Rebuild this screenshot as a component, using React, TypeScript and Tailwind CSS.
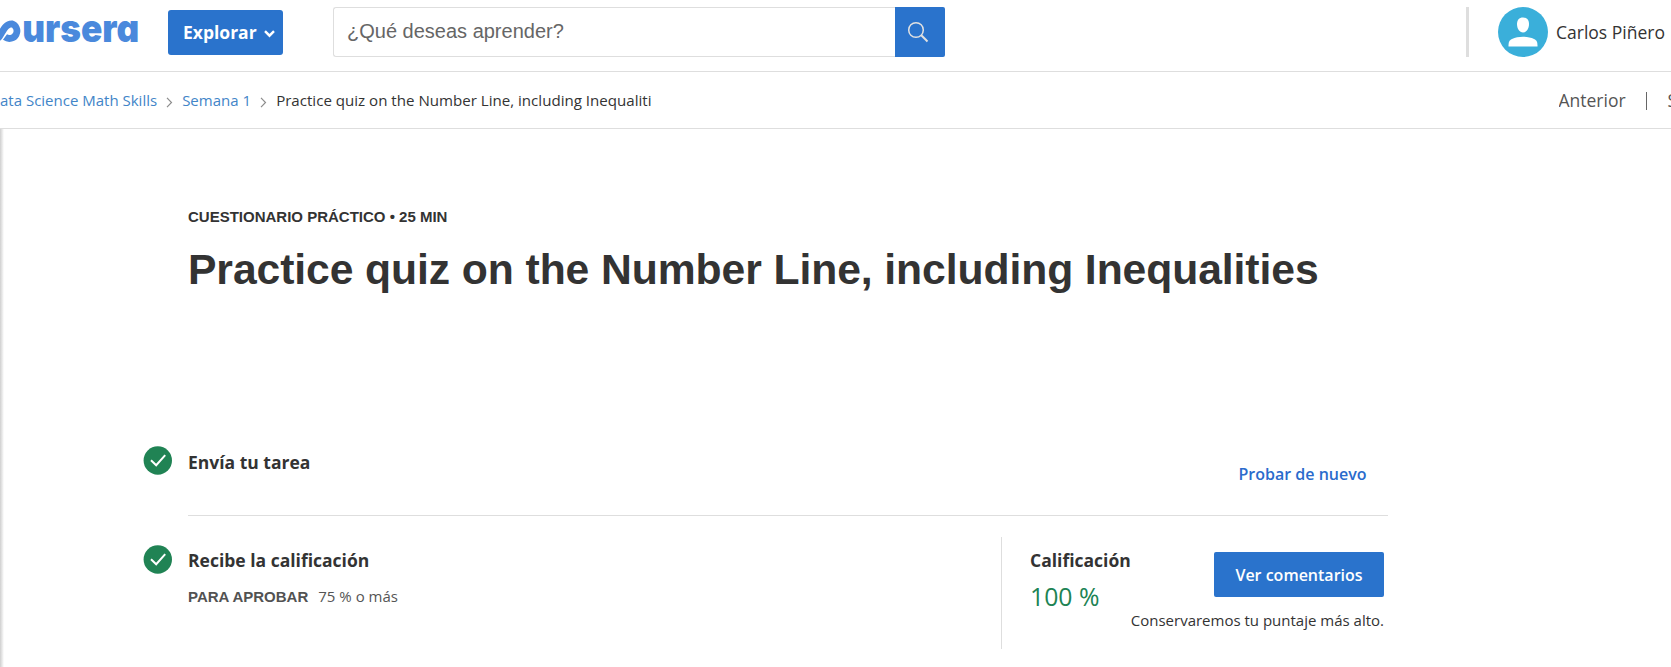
const SANS = 'font-["Open_Sans",sans-serif]';
const ARIAL = 'font-["Liberation_Sans",Arial,sans-serif]';

function Logo() {
  return (
    <svg className="block h-[50px] w-[140px] shrink-0" viewBox="0 0 140 50" fill="none" role="img" aria-label="coursera">
      <path d="M-2 31 C1.500 28.500 4 16.800 11.700 16.800 A7.500 7.500 0 1 1 5 30" stroke="#4A89DC" strokeWidth="6.800" />
      <text
        x="22.2"
        y="34.8"
        textLength="117"
        lengthAdjust="spacingAndGlyphs"
        fill="#4A89DC"
        className='font-["Inter",sans-serif] text-[39px] font-black [font-feature-settings:"cv11"]'
      >
        ursera
      </text>
    </svg>
  );
}

function Check() {
  return (
    <svg className="block size-[29px] shrink-0" viewBox="0 0 29 29" fill="none">
      <circle cx="14.8" cy="14.5" r="14.2" fill="#208354" />
      <path d="M8 14.2 L13.2 19.2 L22.2 9.2" stroke="#fff" strokeWidth="2" />
    </svg>
  );
}

function Chevron({ className }: { className: string }) {
  return (
    <svg className={`h-[11px] w-[7px] shrink-0 ${className}`} viewBox="0 0 7 11" fill="none">
      <path d="M1 0.8 L5.5 5.5 L1 10.2" stroke="#8c8c8c" strokeWidth="1.2" />
    </svg>
  );
}

function Header() {
  return (
    <header className="flex h-[72px] items-start border-b border-[#dedede] pt-[7px]">
      <Logo />
      <button className="mt-[3px] ml-7 flex h-[45px] w-[115px] shrink-0 items-center rounded-[3px] bg-[#2a73cc] pl-[15px] text-[17.5px] font-bold text-white">
        Explorar
        <svg className="mt-[3px] ml-[7px] h-[8px] w-[11px]" viewBox="0 0 11 8" fill="none">
          <path d="M1 1.2 L5.5 5.7 L10 1.2" stroke="#fff" strokeWidth="2.4" />
        </svg>
      </button>
      <div className="ml-[50px] flex h-[50px] w-[612px] shrink-0">
        <div className={`flex flex-1 items-center rounded-l-[3px] border border-r-0 border-[#dedede] pb-[3px] pl-[13px] text-[20px] text-[#666] ${ARIAL}`}>
          ¿Qué deseas aprender?
        </div>
        <div className="flex w-[50px] items-center justify-center rounded-r-[2px] bg-[#2a73cc]">
          <svg className="mr-[4px] size-[22px]" viewBox="0 0 22 22" fill="none" stroke="#e1e1e1" strokeWidth="1.5">
            <circle cx="9" cy="9" r="7.3" />
            <path d="M14.3 14.3 L20.5 20.5" strokeWidth="2" />
          </svg>
        </div>
      </div>
      <div className="ml-auto flex h-[50px] shrink-0 items-center pr-[3px] whitespace-nowrap">
        <div className="h-[50px] w-[3px] bg-[#dedede]" />
        <svg className="ml-[29px] size-[50px]" viewBox="0 0 50 50">
          <circle cx="25" cy="25" r="25" fill="#3aafda" />
          <path d="M25 10.4 C29 10.4 31 13 31 17 C31 21.500 28.500 25.500 25 25.500 C21.500 25.500 19 21.500 19 17 C19 13 21 10.4 25 10.4Z" fill="#fff" />
          <path d="M10.500 39.500 C10.500 35 11 33.500 14 32 C20 29 30 29 36 32 C39 33.500 39.500 35 39.500 39.500Z" fill="#fff" />
        </svg>
        <span className="ml-2 w-[112px] text-[17.5px] text-[#333]">Carlos Piñero</span>
      </div>
    </header>
  );
}

function Breadcrumbs() {
  return (
    <nav className="flex h-[57px] items-center overflow-hidden border-b border-[#dedede] text-[15px] whitespace-nowrap">
      <a className="text-[#4285c8]">ata Science Math Skills</a>
      <Chevron className="ml-[9px] mt-1" />
      <a className="ml-[9px] w-[69px] text-[#4285c8]">Semana 1</a>
      <Chevron className="ml-[9px] mt-1" />
      <span className="ml-[9px] w-[375px] shrink-0 overflow-hidden text-[15.1px] text-[#333]">
        Practice quiz on the Number Line, including Inequalities
      </span>
      <div className="ml-auto flex h-full w-[112.5px] shrink-0 items-center overflow-hidden text-[17.5px] text-[#555]">
        <span className="w-[87px] shrink-0">Anterior</span>
        <span className="mt-px h-[18px] w-px shrink-0 bg-[#666]" />
        <span className="ml-[21px]">Siguiente</span>
      </div>
    </nav>
  );
}

export default function App() {
  return (
    <div className={`h-[667px] w-[1671px] overflow-hidden bg-white ${SANS}`}>
      <Header />
      <Breadcrumbs />
      <div className="flex h-[538px]">
        <div className="w-1 shrink-0 bg-linear-to-r from-[#cfcfcf] to-white" />
        <main className="ml-[139px] w-[1245px]">
          <div className={`pt-[78px] pl-[45px] whitespace-nowrap text-[#333] ${ARIAL}`}>
            <p className="h-5 text-[15px] leading-5 font-bold">CUESTIONARIO PRÁCTICO • 25 MIN</p>
            <h1 className="mt-[17px] h-[50px] text-[42.66px] leading-[50px] font-bold tracking-[-0.085px]">
              Practice quiz on the Number Line, including Inequalities
            </h1>
          </div>

          <section className="mt-[152px] flex h-[70px]">
            <Check />
            <div className="ml-4 flex flex-1 justify-between border-b border-[#dedede]">
              <h2 className="mt-1 text-[17.5px] leading-6 font-bold text-[#333]">Envía tu tarea</h2>
              <a className="mt-4 mr-[21.5px] text-[16px] leading-6 font-semibold text-[#2a6bcc]">Probar de nuevo</a>
            </div>
          </section>

          <section className="flex pt-[21px]">
            <div className="pt-[8px]">
              <Check />
            </div>
            <div className="ml-4 w-[813px]">
              <h2 className="mt-[11px] text-[17.5px] leading-6 font-bold text-[#333]">Recibe la calificación</h2>
              <p className="mt-3 flex items-baseline gap-[10px] text-[15px] leading-6 text-[#555]">
                <span className={`font-bold text-[#525252] ${ARIAL}`}>PARA APROBAR</span>
                <span>75 % o más</span>
              </p>
            </div>
            <div className="flex h-[112px] flex-1 justify-between border-l border-[#dedede] pr-1 pl-7 whitespace-nowrap">
              <div className="w-[100px]">
                <h2 className="mt-[11px] text-[17.5px] leading-6 font-bold text-[#333]">Calificación</h2>
                <p className="mt-[9px] text-[24.8px] leading-[30px] text-[#208354]">100 %</p>
              </div>
              <div className="flex w-[170px] flex-col items-end">
                <button className="mt-[15px] h-[45px] w-[170px] rounded-[2px] bg-[#2a73cc] text-[16px] font-semibold text-white">
                  Ver comentarios
                </button>
                <p className="mt-[11px] text-[15px] leading-6 text-[#333]">Conservaremos tu puntaje más alto.</p>
              </div>
            </div>
          </section>
        </main>
      </div>
    </div>
  );
}
